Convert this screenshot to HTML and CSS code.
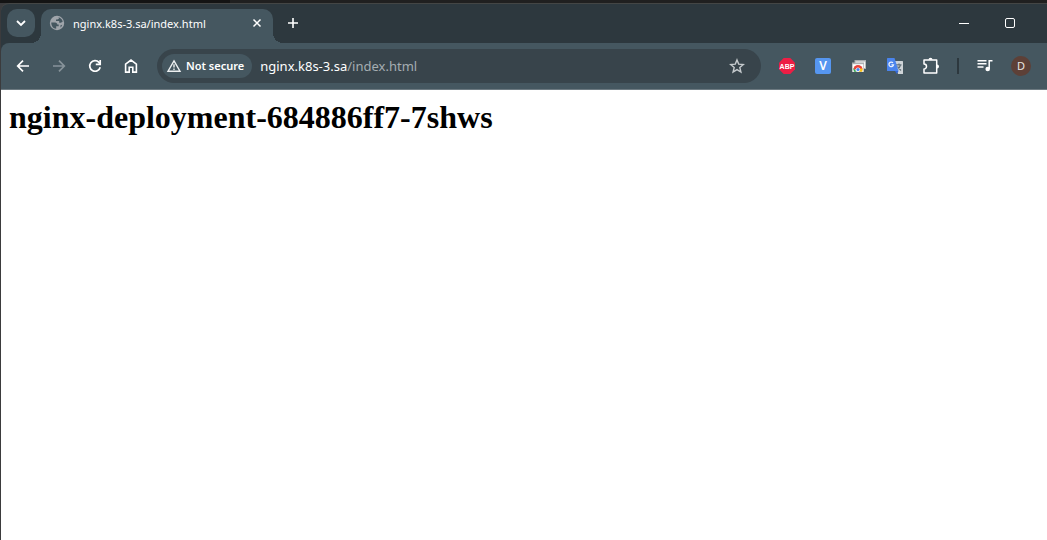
FILE: index.html
```html
<!DOCTYPE html>
<html lang="en">
<head>
<meta charset="utf-8">
<title>nginx.k8s-3.sa/index.html</title>
<link rel="stylesheet" href="styles.css">
</head>
<body>
<div class="desktop-strip"></div>
<div class="window">
  <header class="tab-bar">
    <button class="tab-search" aria-label="Search tabs">
      <svg width="16" height="16" viewBox="0 0 16 16" fill="none" stroke="#fff" stroke-width="1.8"><path d="M4 6l4 4 4-4"/></svg>
    </button>
    <div class="tab">
      <svg class="globe" width="16" height="16" viewBox="0 0 16 16"><circle cx="8" cy="8" r="7.200" fill="#a0a5ab"/><path fill="#455760" d="M2.300 7.400l3.800.1c1.500.1 2.200.9 2.200 2.100h1.400v1.600H7.200v2.500C4.300 13.500 2.200 11 2.300 7.400zM8.300 2.300h1.600v.8c0 1-.7 1.400-1.700 1.400H7v1.500h3.200v1.700h1.600c.7 0 1.200-.6 1.900-1.100-.5-2.400-2.700-4.300-5.400-4.300zM11.500 10.200l1.700-.5-.9 2-.8.7z"/></svg>
      <span class="tab-title">nginx.k8s-3.sa/index.html</span>
      <button class="tab-close" aria-label="Close tab">
        <svg width="16" height="16" viewBox="0 0 16 16" stroke="#fff" stroke-width="1.5"><path d="M4.500 4.500l7 7M11.500 4.500l-7 7"/></svg>
      </button>
    </div>
    <button class="new-tab" aria-label="New tab">
      <svg width="16" height="16" viewBox="0 0 16 16" stroke="#fff" stroke-width="1.600"><path d="M8 3v10M3 8h10"/></svg>
    </button>
    <div class="window-controls">
      <button aria-label="Minimize"><svg width="10" height="10" viewBox="0 0 10 10" stroke="#fff"><path d="M0 5.500h10"/></svg></button>
      <button aria-label="Maximize"><svg width="10" height="10" viewBox="0 0 10 10" fill="none" stroke="#fff"><rect x=".5" y=".5" width="9" height="9" rx="1.500"/></svg></button>
    </div>
  </header>
  <nav class="toolbar">
    <button class="tool" aria-label="Back"><svg width="16" height="16" viewBox="0 0 16 16" fill="none" stroke="#fff" stroke-width="1.700"><path d="M14 8H3M8 2.700L2.700 8 8 13.300"/></svg></button>
    <button class="tool" aria-label="Forward" disabled><svg width="16" height="16" viewBox="0 0 16 16" fill="none" stroke="#87939a" stroke-width="1.700"><path d="M2 8h11M8 2.700L13.300 8 8 13.300"/></svg></button>
    <button class="tool" aria-label="Reload"><svg width="16" height="16" viewBox="0 0 16 16" fill="none" stroke="#fff" stroke-width="1.700"><path d="M13.200 9.200A5.300 5.300 0 1 1 12 4.400l1 1.400"/><path d="M13.200 2v4.400H8.800"/></svg></button>
    <button class="tool" aria-label="Home"><svg width="16" height="16" viewBox="0 0 16 16" fill="none" stroke="#fff" stroke-width="1.600"><path d="M2.600 6.200L8 2l5.400 4.200v7.900H9.800V9.300H6.200v4.800H2.600z"/></svg></button>
    <div class="omnibox">
      <button class="security">
        <svg width="16" height="16" viewBox="0 0 16 16"><path fill="none" stroke="#eceff0" stroke-width="1.400" d="M8 2.800L14 13.200H2z"/><path fill="#eceff0" d="M7.300 6.300h1.400v3.300H7.300zM7.300 10.500h1.400v1.400H7.300z"/></svg>
        <span>Not secure</span>
      </button>
      <a class="address" href="#"><span class="host">nginx.k8s-3.sa</span>/index.html</a>
      <button class="bookmark" aria-label="Bookmark this tab"><svg width="16" height="16" viewBox="0 0 16 16" fill="none" stroke="#c5cacd" stroke-width="1.400"><path d="M8 1.900l1.700 4.200 4.600.4-3.500 3 1.100 4.500L8 11.600 4.100 14l1.100-4.500-3.500-3 4.600-.4z"/></svg></button>
    </div>
    <button class="tool" aria-label="Adblock Plus"><svg width="16" height="16" viewBox="0 0 16 16"><path fill="#ed1e45" d="M4.700 0h6.600L16 4.700v6.600L11.300 16H4.700L0 11.300V4.700z"/><text class="abp" x="8" y="11" text-anchor="middle">ABP</text></svg></button>
    <button class="tool" aria-label="V extension"><span class="v-badge">V</span></button>
    <button class="tool" aria-label="Web store"><svg width="16" height="16" viewBox="0 0 16 16"><path fill="#a9adb0" d="M3.500 2h11.500v9H3.500z"/><path fill="#f4f4f4" d="M4.500 3.500h9.700v6.500H4.500z"/><path fill="#aeb1b3" d="M1 4.500h12v9.500H1z"/><path fill="#fff" d="M1.700 6.200h10.600v7.500H1.700z"/><path fill="#e8453c" d="M2.400 11.500a4.600 4.600 0 0 1 9.200 0z"/><path fill="#34a853" d="M2.600 10l3 3.700H3.200q-1.200-1.700-.6-3.700z"/><path fill="#fbc116" d="M8.500 10.500h3q.4 1.700-.6 3.200H8z"/><circle cx="7" cy="11.500" r="2.100" fill="#fff"/><circle cx="7" cy="11.500" r="1.600" fill="#4285f4"/></svg></button>
    <button class="tool" aria-label="Translate"><svg width="16" height="16" viewBox="0 0 16 16"><path fill="#cfd4d8" d="M7 3h8.500q.5 0 .5.500v12q0 .5-.5.500H11z"/><path fill="none" stroke="#62717a" stroke-width="1.200" d="M9 6.800h5.500M12 5.500v1.300M13.500 7c-.5 2-1.600 3.200-3 4.400M10.500 8.500l3.500 4"/><path fill="#3367d6" d="M8 13h3.500L9.800 16z"/><path fill="#4a84ed" d="M0 .500Q0 0 .500 0H7.500l4 13H.500q-.5 0-.5-.5z"/><path fill="none" stroke="#e8f0fd" stroke-width="1.300" d="M6 4.900a2.300 2.300 0 1 0 .5 2H4.400"/></svg></button>
    <button class="tool" aria-label="Extensions"><svg width="20" height="20" viewBox="0 0 20 20"><path fill="none" stroke="#fff" stroke-width="1.500" stroke-linejoin="round" d="M3 4h12.700v12.900H3V13a2.500 2.500 0 0 0 0-5z"/><path fill="#fff" d="M7.500 3.800a2 2 0 0 1 4 0zM16 8.500a2 2 0 0 1 0 4z"/></svg></button>
    <span class="divider"></span>
    <button class="tool" aria-label="Media controls"><svg width="16" height="16" viewBox="0 0 16 16"><path fill="none" stroke="#fff" stroke-width="1.500" d="M.5 2.700h9M.5 5.800h9M.5 8.900h6M12.200 11V2.700h3.300"/><circle cx="10.700" cy="11" r="2.300" fill="#fff"/></svg></button>
    <button class="tool" aria-label="Profile"><span class="avatar">D</span></button>
  </nav>
  <main class="page">
    <h1>nginx-deployment-684886ff7-7shws</h1>
  </main>
</div>
</body>
</html>
```
FILE: styles.css
```css
* { box-sizing: border-box; }
body {
  margin: 0;
  min-height: 100vh;
  display: flex;
  flex-direction: column;
  background: #3b3b3d;
  font-family: "Noto Sans", "Open Sans", sans-serif;
}
button {
  border: 0;
  padding: 0;
  background: none;
  color: #fff;
  font-family: inherit;
  display: flex;
  align-items: center;
  justify-content: center;
  flex: none;
}
svg { display: block; flex: none; }
.desktop-strip {
  height: 3px;
  background: linear-gradient(90deg, #141414 230px, #202020 230px);
}
.window {
  flex: 1;
  display: flex;
  flex-direction: column;
  margin-left: 1px;
  background: #2d383e;
  border-top: 1px solid #444645;
  border-top-left-radius: 8px;
}
.tab-bar {
  height: 39px;
  display: flex;
  align-items: flex-start;
  padding: 5px 14px 0 6px;
}
.tab-search {
  width: 28px;
  height: 28px;
  border-radius: 10px;
  background: #455760;
}
.tab {
  position: relative;
  width: 232px;
  height: 34px;
  margin-left: 6px;
  padding: 0 8px;
  display: flex;
  align-items: center;
  gap: 8px;
  border-radius: 10px 10px 0 0;
  background: #455760;
  color: #fff;
}
.tab::before,
.tab::after {
  content: "";
  position: absolute;
  bottom: 0;
  width: 10px;
  height: 10px;
}
.tab::before {
  right: 100%;
  background: radial-gradient(circle at 0 0, transparent 10px, #455760 10px);
}
.tab::after {
  left: 100%;
  background: radial-gradient(circle at 100% 0, transparent 10px, #455760 10px);
}
.globe, .tab-close { margin-bottom: 6px; }
.tab-title {
  flex: 1;
  margin-bottom: 4px;
  font-size: 11px;
  line-height: 16px;
  white-space: nowrap;
}
.tab-close { width: 16px; height: 16px; }
.new-tab { width: 28px; height: 28px; margin-left: 6px; }
.window-controls { display: flex; margin-left: auto; }
.window-controls button { width: 46px; height: 28px; }
.toolbar {
  height: 47px;
  display: flex;
  align-items: center;
  padding: 0 8px 0 4px;
  background: #455760;
  border-bottom: 1px solid #6d7a81;
  border-top-left-radius: 8px;
}
.tool { width: 36px; height: 34px; }
.omnibox {
  flex: 1;
  height: 34px;
  margin: 0 8px;
  padding: 0 16px 0 5px;
  display: flex;
  align-items: center;
  border-radius: 17px;
  background: #38444b;
}
.security {
  height: 24px;
  padding: 0 8px 0 4px;
  gap: 4px;
  border-radius: 12px;
  background: #455760;
  font-size: 11px;
  line-height: 16px;
  font-weight: 600;
}
.address {
  flex: 1;
  margin-left: 8px;
  color: #a5adb1;
  font-size: 13px;
  line-height: 20px;
  text-decoration: none;
  white-space: nowrap;
}
.host { color: #fff; }
.abp { font: 700 7px "Liberation Sans", sans-serif; fill: #fff; }
.v-badge {
  width: 16px;
  height: 16px;
  border-radius: 2px;
  background: #5696f0;
  font-size: 12px;
  line-height: 16px;
  font-weight: 600;
}
.divider { width: 2px; height: 16px; margin: 0 8px; background: #2d383e; }
.avatar {
  width: 20px;
  height: 20px;
  border-radius: 50%;
  background: #5d4037;
  color: #e9e4e2;
  font-size: 11px;
  line-height: 20px;
}
.page { flex: 1; padding: 8px; background: #fff; color: #000; }
h1 {
  margin: 0;
  font: 700 32px/38px "Liberation Serif", serif;
}
```
